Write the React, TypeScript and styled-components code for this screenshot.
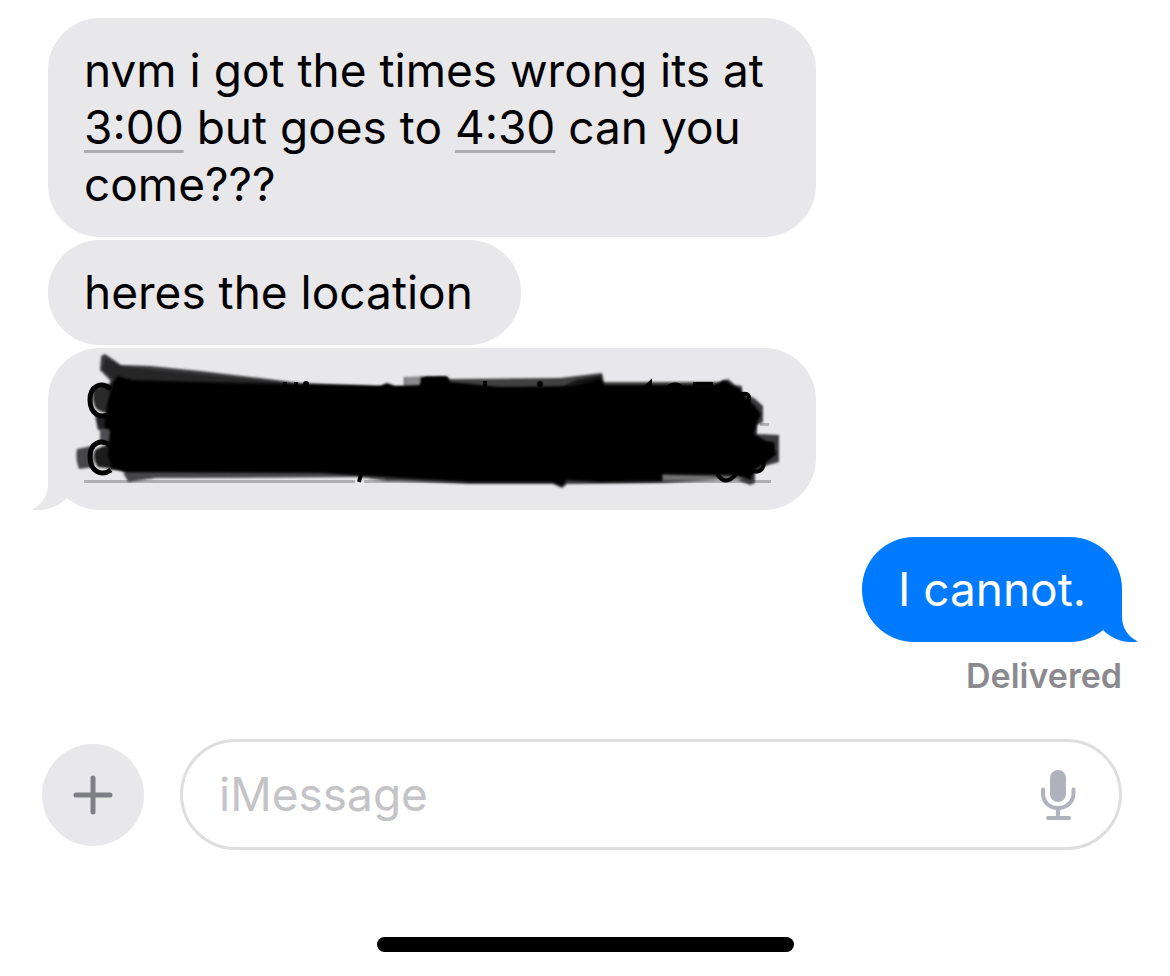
import React from "react";
import styled, { createGlobalStyle, css } from "styled-components";

const GlobalStyle = createGlobalStyle`
  *, *::before, *::after { box-sizing: border-box; }
  body { margin: 0; background: #fff; }
`;

const Screen = styled.div`
  display: flex;
  flex-direction: column;
  min-height: 100vh;
  padding: 18px 48px 24px;
  font-family: Inter, "Liberation Sans", sans-serif;
  font-size: 46px;
  line-height: 57px;
  color: #000;
`;

const Thread = styled.main`
  display: flex;
  flex-direction: column;
  gap: 27px;
`;

const Group = styled.section<{ $sent?: boolean }>`
  display: flex;
  flex-direction: column;
  align-items: ${(p) => (p.$sent ? "flex-end" : "flex-start")};
  gap: 3px;
`;

const Bubble = styled.div<{ $sent?: boolean }>`
  position: relative;
  max-width: 768px;
  padding: ${(p) => (p.$sent ? "24px 36px" : "24px 48px 24px 36px")};
  border-radius: 52px;
  background: ${(p) => (p.$sent ? "#007aff" : "#e8e8ea")};
  color: ${(p) => (p.$sent ? "#fff" : "#000")};
`;

const TailShape = styled.svg<{ $sent?: boolean }>`
  position: absolute;
  bottom: 0;
  width: 52px;
  height: 52px;
  ${(p) =>
    p.$sent
      ? css`
          right: -16px;
          fill: #007aff;
          transform: scaleX(-1);
        `
      : css`
          left: -16px;
          fill: #e8e8ea;
        `}
`;

const TimeLink = styled.a`
  color: inherit;
  text-decoration: underline;
  text-decoration-color: #acacae;
  text-decoration-thickness: 3px;
  text-underline-offset: 6px;
  text-decoration-skip-ink: none;
`;

const Scribble = styled.svg`
  position: relative;
  display: block;
  width: 684px;
  max-width: 100%;
  height: 114px;
  overflow: visible;
`;

const Status = styled.p`
  margin: 12px 0 0;
  font-size: 34px;
  line-height: 38px;
  font-weight: 600;
  color: #8a8a8e;
`;

const Composer = styled.form`
  display: flex;
  align-items: center;
  gap: 36px;
  margin: 44px 0 0 -6px;
`;

const AddButton = styled.button`
  display: flex;
  align-items: center;
  justify-content: center;
  flex: none;
  width: 102px;
  height: 102px;
  padding: 0;
  border: 0;
  border-radius: 50%;
  background: #e8e8ea;
`;

const Field = styled.div`
  display: flex;
  align-items: center;
  flex: 1;
  min-width: 0;
  height: 111px;
  padding: 0 42px 0 36px;
  border: 3px solid #dedee0;
  border-radius: 56px;
`;

const MessageInput = styled.input`
  flex: 1;
  min-width: 0;
  padding: 0;
  border: 0;
  outline: 0;
  background: none;
  font: inherit;
  color: #000;
  &::placeholder {
    color: #c4c4c6;
    opacity: 1;
  }
`;

const MicButton = styled.button`
  display: flex;
  padding: 0;
  border: 0;
  background: none;
`;

const HomeBar = styled.div`
  align-self: center;
  width: 417px;
  max-width: 60%;
  height: 15px;
  margin-top: auto;
  border-radius: 8px;
  background: #000;
`;

function Tail({ sent }: { sent?: boolean }) {
  return (
    <TailShape $sent={sent} viewBox="0 0 52 52" aria-hidden="true">
      <path d="M16 0V26C16 38 10 47 0 51.500C13 54 26 49 35 40L52 20V0Z" />
    </TailShape>
  );
}

function MarkerScribble() {
  return (
    <Scribble viewBox="84 372 684 114" role="img" aria-label="Crossed-out address">
      <defs>
        <filter id="soft" x="-5%" y="-20%" width="110%" height="140%">
          <feGaussianBlur stdDeviation="0.8" />
        </filter>
      </defs>
      <path d="M84 481.500H355M364 481.500H771M760 424.500H769" stroke="#b0b0b2" strokeWidth="3" />
      <g filter="url(#soft)">
        <path d="M101 357Q104 352 108 356L121 365L150 366L200 371L260 378L300 383L404 387V377L446 376L450 379L560 378L602 373L604 382L720 382L728 379L735 385L742 386V394L754 398L763 406V422L757 425V434L779 435V462L765 466L755 472V483L750 485L735 479L662 483L567 484L562 488L553 484L470 484L400 481L386 481L360 477L155 478L128 482L124 470H110V380L100 370Z" fill="#3b3b3c" />
        <path d="M106 358L121 366L155 370L225 377L290 383V386L115 381L102 369Z" fill="#272728" />
        <path d="M94 389Q103 385 115 382V412Q101 415 95 407Q91 397 94 389Z" fill="#2b2b2c" />
        <path d="M95 415H115V431L98 430Z" fill="#242425" />
        <path d="M100 429H115V444H100Z" fill="#505052" />
        <path d="M77 449L92 446L94 467L79 469Q75 458 77 449Z" fill="#464648" />
        <path d="M95 450Q103 445 115 444V469L98 467Q92 459 95 450Z" fill="#1a1a1b" />
        <path d="M405 377H425V387H405Z" fill="#89898b" />
        <path d="M420 377H447V389H420Z" fill="#050505" />
        <path d="M446 379L560 379L602 374V382H720V387H446Z" fill="#404041" />
        <path d="M575 380L602 375V388H560Z" fill="#161616" />
        <path d="M123 473L300 471L385 475V480L360 477L155 478L128 481Z" fill="#474748" />
        <path d="M663 475L745 477L738 480H663Z" fill="#737374" />
      </g>
      <g filter="url(#soft)">
        <path d="M113 382L118 376L132 380L280 384L380 386L387 383L395 386L420 385L425 377H447L450 382L500 387L575 386L600 379L605 385L715 385L724 380L732 385L740 389L747 399L755 406L761 414L757 423L754 434L766 441L774 442L776 455L765 463L754 470L751 480L736 475L662 474V481L600 482L567 480L562 486L553 482L470 482L385 477L320 473L124 472L112 468L108 456L110 430L104 427L107 405Z" />
      </g>
      <g fill="none" stroke="#000" strokeWidth="5">
        <path d="M111 389C101 381 90 386 90 400C90 414 101 420 111 413" />
        <path d="M111 446C101 438 90 443 90 457C90 471 101 477 111 470" />
        <path d="M285 382V390M296 382V390M485 381V392" strokeWidth="4" />
        <path d="M641 392L650 383V390M666 389Q675 380 684 389M693 384H713" strokeWidth="4" />
        <path d="M740 395Q752 390 748 404M763 453Q768 475 750 471M717 474Q726 487 736 474" strokeWidth="4" />
        <path d="M361 474L359 482" strokeWidth="4" />
      </g>
      <circle cx="306" cy="384" r="3" />
      <circle cx="540" cy="384" r="3" />
    </Scribble>
  );
}

export default function App() {
  return (
    <>
      <GlobalStyle />
      <Screen>
        <Thread>
          <Group>
            <Bubble>
              nvm i got the times wrong its at <TimeLink href="#event-start">3:00</TimeLink> but goes to{" "}
              <TimeLink href="#event-end">4:30</TimeLink> can you come???
            </Bubble>
            <Bubble>heres the location</Bubble>
            <Bubble>
              <Tail />
              <MarkerScribble />
            </Bubble>
          </Group>
          <Group $sent>
            <Bubble $sent>
              <Tail sent />
              I cannot.
            </Bubble>
            <Status>Delivered</Status>
          </Group>
        </Thread>
        <Composer onSubmit={(e) => e.preventDefault()}>
          <AddButton type="button" aria-label="Add attachment">
            <svg width="40" height="40" viewBox="0 0 40 40" fill="none" stroke="#7e7e85" strokeWidth="5" strokeLinecap="round">
              <path d="M20 3V37M3 20H37" />
            </svg>
          </AddButton>
          <Field>
            <MessageInput type="text" placeholder="iMessage" aria-label="iMessage" />
            <MicButton type="button" aria-label="Dictate">
              <svg width="37" height="51" viewBox="0 0 37 51" fill="none" stroke="#b0b3bd" strokeWidth="4" strokeLinecap="round">
                <rect x="10" y="1" width="16" height="32" rx="8" fill="#b0b3bd" stroke="none" />
                <path d="M3 20.500V24C3 33 9 39 18 39S33.500 33 33.500 24V20.500M18 39V48M8 49H29" />
              </svg>
            </MicButton>
          </Field>
        </Composer>
        <HomeBar />
      </Screen>
    </>
  );
}
